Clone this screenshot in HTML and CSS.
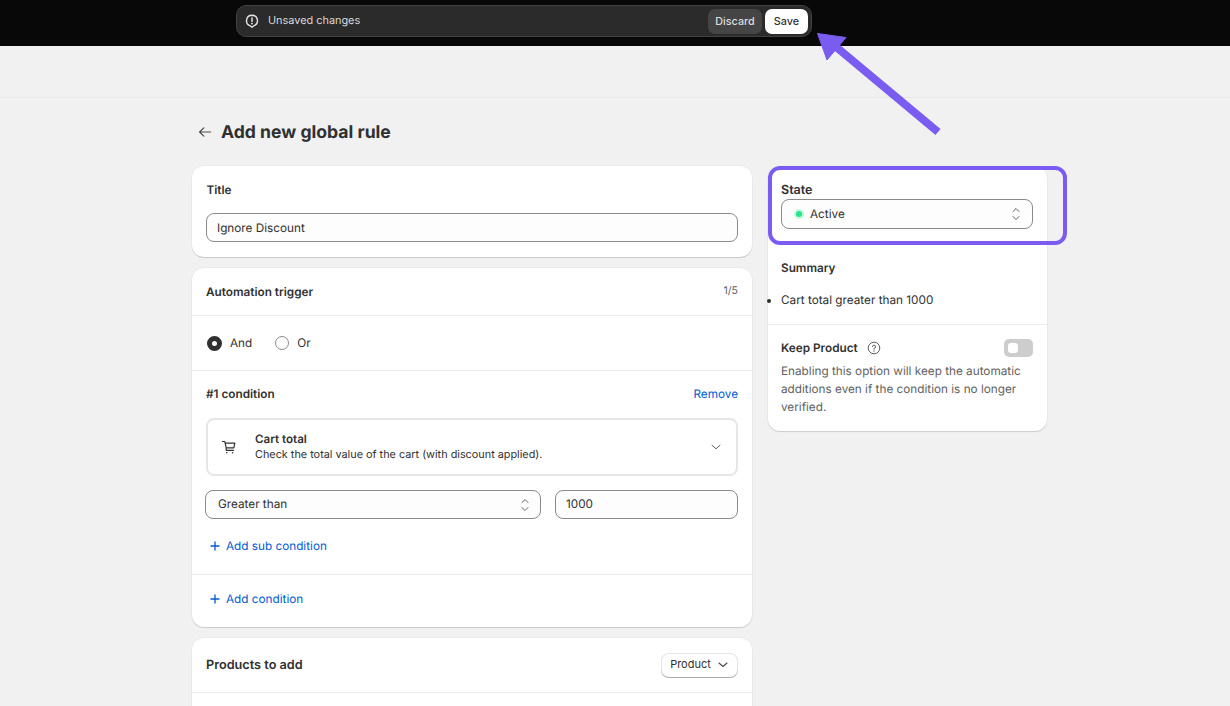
FILE: index.html
```html
<!DOCTYPE html>
<html lang="en">
<head>
  <meta charset="UTF-8" />
  <title>Add new global rule</title>
  <link rel="stylesheet" href="styles.css">
</head>
<body>
  <div class="topbar">
    <div class="savebar">
      <svg class="savebar-icon" width="14" height="14" viewBox="0 0 14 14" fill="none">
        <path d="M7 1.2a5.5 5.5 0 0 1 1.6 10.75L7 13.2l-1.6-1.25A5.5 5.5 0 0 1 7 1.2z" stroke="#e3e3e3" stroke-width="1.4" stroke-linejoin="round"/>
        <path d="M7 4v3.4" stroke="#e3e3e3" stroke-width="1.5" stroke-linecap="round"/>
        <circle cx="7" cy="9.6" r=".9" fill="#e3e3e3"/>
      </svg>
      <span class="savebar-text">Unsaved changes</span>
      <button class="btn-discard">Discard</button>
      <button class="btn-save">Save</button>
    </div>
  </div>
  <div class="subbar"></div>

  <div class="page">
    <div class="page-title">
      <svg width="14" height="14" viewBox="0 0 14 14" fill="none">
        <path d="M12.6 7H1.6M5.8 2.8 1.6 7l4.2 4.2" stroke="#4a4a4a" stroke-width="1.2" stroke-linecap="round" stroke-linejoin="round"/>
      </svg>
      <h1>Add new global rule</h1>
    </div>

    <div class="columns">
      <div class="col-main">
        <div class="card title-card">
          <div class="card-label">Title</div>
          <div class="field">Ignore Discount</div>
        </div>

        <div class="card">
          <div class="section trigger-head">
            <div class="card-label">Automation trigger</div>
            <div class="count">1/5</div>
          </div>
          <div class="section radios">
            <span class="radio radio-on"></span><span class="radio-text">And</span>
            <span class="radio radio-off"></span><span class="radio-text">Or</span>
          </div>
          <div class="section condition">
            <div class="condition-head">
              <div class="card-label">#1 condition</div>
              <a class="link" href="#">Remove</a>
            </div>
            <div class="picker">
              <svg width="16" height="16" viewBox="0 0 16 16" fill="none">
                <path d="M1.5 2.5h2.2l.5 1.6h9.6l-1 4.8H5.2L4.2 4.1M5.2 8.9v2.4h7.4" stroke="#303030" stroke-width="1.2" stroke-linecap="round" stroke-linejoin="round"/>
                <circle cx="5.8" cy="13.8" r=".8" fill="#303030"/>
                <circle cx="11.6" cy="13.8" r=".8" fill="#303030"/>
              </svg>
              <div class="picker-text">
                <div class="picker-title">Cart total</div>
                <div>Check the total value of the cart (with discount applied).</div>
              </div>
              <svg width="12" height="12" viewBox="0 0 12 12" fill="none">
                <path d="M2 4.2l4 3.6 4-3.6" stroke="#616161" stroke-width="1" stroke-linecap="round" stroke-linejoin="round"/>
              </svg>
            </div>
            <div class="condition-row">
              <div class="field select grow">
                <span>Greater than</span>
                <svg width="10" height="16" viewBox="0 0 10 16" fill="none">
                  <path d="M2 5.5 5 2.5l3 3M2 10.5l3 3 3-3" stroke="#616161" stroke-width="1" stroke-linecap="round" stroke-linejoin="round"/>
                </svg>
              </div>
              <div class="field value"><span>1000</span></div>
            </div>
            <a class="link add-link" href="#">
              <svg width="10" height="10" viewBox="0 0 10 10" fill="none"><path d="M5 1v8M1 5h8" stroke="#005bd3" stroke-width="1.3" stroke-linecap="round"/></svg>
              Add sub condition
            </a>
          </div>
          <div class="section add-row">
            <a class="link add-link" href="#">
              <svg width="10" height="10" viewBox="0 0 10 10" fill="none"><path d="M5 1v8M1 5h8" stroke="#005bd3" stroke-width="1.3" stroke-linecap="round"/></svg>
              Add condition
            </a>
          </div>
        </div>

        <div class="card products-card">
          <div class="section products-head">
            <div class="products-title">Products to add</div>
            <button class="btn-product">
              Product
              <svg width="12" height="12" viewBox="0 0 12 12" fill="none">
                <path d="M2 5l4 3.5L10 5" stroke="#4a4a4a" stroke-width="1.1" stroke-linecap="round" stroke-linejoin="round"/>
              </svg>
            </button>
          </div>
          <div class="products-body"></div>
        </div>
      </div>

      <div class="col-side">
        <div class="card side-card">
          <div class="side-state">
            <div class="state-label">State</div>
            <div class="field select state-select">
              <span class="state-value"><span class="dot"></span>Active</span>
              <svg width="10" height="16" viewBox="0 0 10 16" fill="none">
                <path d="M2 5.5 5 2.5l3 3M2 10.5l3 3 3-3" stroke="#616161" stroke-width="1" stroke-linecap="round" stroke-linejoin="round"/>
              </svg>
            </div>
          </div>
          <div class="side-summary">
            <div class="card-label">Summary</div>
            <ul>
              <li>Cart total greater than 1000</li>
            </ul>
          </div>
          <div class="side-keep">
            <div class="keep-head">
              <div class="card-label">Keep Product</div>
              <svg width="14" height="14" viewBox="0 0 14 14" fill="none">
                <circle cx="7" cy="7" r="5.8" stroke="#616161" stroke-width="1"/>
                <path d="M5.4 5.6A1.6 1.6 0 1 1 7 7.4v.8" stroke="#616161" stroke-width="1" stroke-linecap="round"/>
                <circle cx="7" cy="10" r=".7" fill="#616161"/>
              </svg>
              <span class="toggle"><span class="toggle-knob"></span></span>
            </div>
            <p>Enabling this option will keep the automatic additions even if the condition is no longer verified.</p>
          </div>
        </div>
      </div>
    </div>
  </div>

  <div class="highlight"></div>
  <svg class="arrow" width="130" height="110" viewBox="0 0 130 110" fill="none">
    <path d="M123 101 20 15" stroke="#7a5cf0" stroke-width="8"/>
    <path d="M2.5 2.5 31 6.5 12 29z" fill="#7a5cf0" stroke="#7a5cf0" stroke-width="1" stroke-linejoin="round"/>
  </svg>
</body>
</html>
```

FILE: styles.css
```css
html, body {
  height: 100%;
  overflow: hidden;
}

body {
  margin: 0;
  background-color: #f1f1f1;
  color: #303030;
  font-family: Inter, "Liberation Sans", sans-serif;
  font-size: 11.75px;
  line-height: 16px;
  text-rendering: geometricPrecision;
}

button {
  font-family: inherit;
  border: 0;
  cursor: pointer;
}

a {
  text-decoration: none;
}

.topbar {
  height: 46px;
  padding: 5px 0 0 236px;
  box-sizing: border-box;
  background-color: #080808;
}

.savebar {
  width: 576px;
  height: 32px;
  box-sizing: border-box;
  display: flex;
  align-items: center;
  gap: 3px;
  padding: 0 3px 0 8px;
  background-color: #2b2b2b;
  border: 1px solid #414141;
  border-radius: 10px;
}

.savebar-icon {
  flex: none;
  margin-right: 6px;
}

.savebar-text {
  flex: 1;
  padding-bottom: 2px;
  color: #d8d8d8;
  font-size: 10.9px;
}

.btn-discard {
  width: 54px;
  height: 25px;
  padding: 0;
  background-color: #454545;
  color: #dcdcdc;
  border-radius: 7px;
  font-size: 10.8px;
  font-weight: 500;
}

.btn-save {
  width: 43px;
  height: 25px;
  padding: 0;
  background-color: #fff;
  color: #303030;
  border-radius: 7px;
  font-size: 10.8px;
  font-weight: 500;
}

.subbar {
  height: 51px;
  border-bottom: 1px solid #e8e8e8;
}

.page {
  width: 855px;
  margin-left: 192px;
}

.page-title {
  display: flex;
  align-items: center;
  gap: 9px;
  height: 68px;
  padding-left: 6px;
}

.page-title h1 {
  margin: 2px 0 0;
  font-size: 17.6px;
  font-weight: 700;
  line-height: 24px;
  color: #303030;
}

.columns {
  display: flex;
  gap: 16px;
  align-items: flex-start;
}

.col-main {
  width: 560px;
  display: flex;
  flex-direction: column;
  gap: 11px;
}

.col-side {
  width: 279px;
}

.card {
  background-color: #fff;
  border-radius: 12px;
  box-shadow: 0 1px 1px rgba(0, 0, 0, 0.14), 0 0 0 1px rgba(0, 0, 0, 0.025);
}

.card-label {
  font-weight: 600;
  color: #303030;
}

.title-card {
  height: 91px;
  box-sizing: border-box;
  padding: 16px 14px 0 14.5px;
}

.field {
  height: 29px;
  box-sizing: border-box;
  padding: 0 10px;
  display: flex;
  align-items: center;
  background-color: #fdfdfd;
  border: 1px solid #8a8a8a;
  border-radius: 8px;
  color: #303030;
}

.title-card .field {
  margin: 15px 0 0 -0.5px;
}

.section {
  border-top: 1px solid #ebebeb;
  padding: 0 14px;
}

.section:first-child {
  border-top: 0;
}

.trigger-head {
  height: 47px;
  display: flex;
  justify-content: space-between;
  align-items: center;
}

.count {
  font-size: 10.5px;
  color: #616161;
  margin-top: -2px;
}

.radios {
  height: 54px;
  display: flex;
  align-items: center;
  padding-left: 15px;
}

.radio {
  box-sizing: border-box;
  border-radius: 50%;
}

.radio-on {
  width: 15px;
  height: 15px;
  border: 5px solid #303030;
}

.radio-off {
  width: 14px;
  height: 14px;
  border: 1px solid #8a8a8a;
  margin-left: 23px;
}

.radio-text {
  margin-left: 8px;
}

.condition {
  height: 204px;
  box-sizing: border-box;
  padding-top: 15px;
}

.condition-head {
  display: flex;
  justify-content: space-between;
  align-items: center;
  height: 16px;
}

.link {
  color: #005bd3;
}

.picker {
  height: 58px;
  box-sizing: border-box;
  margin: 16px 0 0 0;
  padding: 0 14px 0 13px;
  display: flex;
  align-items: center;
  gap: 18px;
  border: 2px solid #e6e6e6;
  border-radius: 8px;
}

.picker-text {
  flex: 1;
  line-height: 15px;
  font-size: 10.85px;
}

.picker-title {
  font-weight: 600;
  font-size: 11.6px;
}

.condition-row {
  display: flex;
  gap: 14px;
  margin: 14px 0 0 -1px;
}

.condition-row .field span {
  padding-bottom: 2px;
}

.select {
  justify-content: space-between;
}

.grow {
  width: 336px;
  box-sizing: border-box;
  padding: 0 10px 0 12px;
}

.value {
  flex: 1;
}

.add-link {
  display: flex;
  align-items: center;
  gap: 6px;
  height: 16px;
  margin: 19px 0 0 4px;
}

.add-row {
  height: 53px;
  box-sizing: border-box;
  padding-top: 0;
}

.add-row .add-link {
  margin-top: 16px;
}

.products-head {
  height: 54px;
  display: flex;
  justify-content: space-between;
  align-items: center;
}

.products-title {
  font-weight: 600;
  font-size: 12.7px;
  padding-top: 1px;
}

.btn-product {
  width: 77px;
  height: 25px;
  display: flex;
  align-items: center;
  justify-content: center;
  gap: 6px;
  padding: 0 0 2px;
  background-color: #fff;
  color: #303030;
  font-size: 11px;
  border-radius: 8px;
  box-shadow: inset 0 -1px 0 rgba(0, 0, 0, 0.25), inset 0 0 0 1px rgba(0, 0, 0, 0.1);
}

.products-body {
  height: 200px;
  border-top: 1px solid #ebebeb;
}

.side-state {
  height: 78px;
  box-sizing: border-box;
  padding: 17px 14px 0 13px;
}

.state-label {
  font-weight: 600;
  font-size: 12.5px;
}

.state-select {
  height: 30px;
  padding: 0 11px 0 14px;
}

.state-value {
  display: flex;
  align-items: center;
  gap: 8px;
}

.dot {
  width: 6px;
  height: 6px;
  border-radius: 50%;
  background-color: #29e58a;
  box-shadow: 0 0 0 2px #c4f9dc;
}

.side-summary {
  height: 80px;
  box-sizing: border-box;
  padding: 16px 13px 0;
}

.side-summary ul {
  margin: 16px 0 0;
  padding: 0;
}

.side-keep {
  border-top: 1px solid #ebebeb;
  padding: 14px 14px 15px 13px;
}

.keep-head {
  display: flex;
  align-items: center;
  gap: 9px;
  height: 18px;
}

.toggle {
  width: 29px;
  height: 18px;
  box-sizing: border-box;
  margin-left: auto;
  padding: 4px;
  background-color: #cdcdcd;
  border-radius: 5px;
}

.toggle-knob {
  display: block;
  width: 10px;
  height: 10px;
  background-color: #fff;
  border-radius: 3px;
}

.side-keep p {
  margin: 5px 0 0;
  color: #616161;
  line-height: 18px;
}

.highlight {
  position: absolute;
  left: 768px;
  top: 166px;
  width: 299px;
  height: 79px;
  box-sizing: border-box;
  border: 4.5px solid #7a5cf0;
  border-radius: 12px;
}

.arrow {
  position: absolute;
  left: 815px;
  top: 31px;
}
```
